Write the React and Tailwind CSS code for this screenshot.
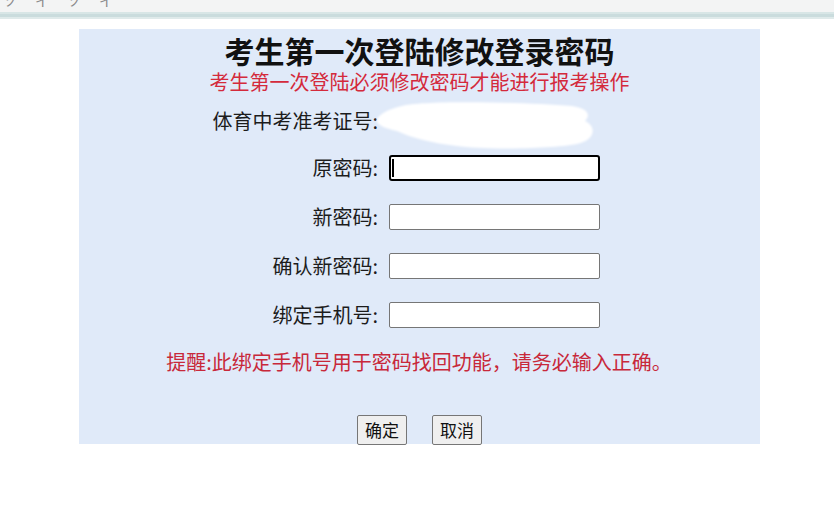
import React from "react";

const cjk = { fontFamily: '"Microsoft YaHei", "Noto Sans CJK SC", "Noto Sans", sans-serif' };

function Row({ label, focused }) {
  return (
    <div className="flex items-center h-[26px]">
      <div className="w-[300px] text-right text-[20px] leading-[26px] text-[#1c1c1c] pr-[1px]">{label}</div>
      <div className="relative ml-[10px]">
        {focused ? (
          <>
            <input
              readOnly
              className="block w-[211px] h-[26px] bg-white border-2 border-black rounded-[3px] outline-none"
            />
            <span className="absolute left-[3px] top-[4px] w-[2px] h-[18px] bg-black" />
          </>
        ) : (
          <input
            readOnly
            className="block w-[211px] h-[26px] bg-white border border-[#767676] rounded-[2px] outline-none"
          />
        )}
      </div>
    </div>
  );
}

export default function App() {
  return (
    <div className="w-[834px] h-[512px] bg-white overflow-hidden" style={cjk}>
      <div className="h-[12px] bg-[#f3f4f4] overflow-hidden relative">
        <div className="absolute left-[3px] top-[-10px] text-[14px] text-[#8a8a8a] tracking-[18px] whitespace-nowrap">ソイソイ</div>
      </div>
      <div className="h-[7px] bg-[#cadcdd] border-t-[2px] border-b-[2px] border-t-[#d8e6e6] border-b-[#dfeaea]" />
      <div className="h-[10px]" />
      <div className="relative ml-[79px] w-[681px] h-[415px] bg-[#e0eaf9] flex flex-col">
        <div className="mt-[3px] h-[36px] leading-[36px] text-center text-[30px] font-bold text-[#111]">
          考生第一次登陆修改登录密码
        </div>
        <div className="mt-[2px] h-[24px] leading-[24px] text-center text-[20px] text-[#d42a3c]">
          考生第一次登陆必须修改密码才能进行报考操作
        </div>
        <div className="mt-[14px] flex items-center h-[26px]">
          <div className="w-[300px] text-right text-[20px] leading-[26px] text-[#1c1c1c] pr-[1px]">体育中考准考证号:</div>
        </div>
        <div className="mt-[21px] flex flex-col gap-[23px]">
          <Row label="原密码:" focused />
          <Row label="新密码:" />
          <Row label="确认新密码:" />
          <Row label="绑定手机号:" />
        </div>
        <div className="mt-[21px] h-[26px] leading-[26px] text-center text-[20px] text-[#c8283a] pr-[1px]">
          提醒:此绑定手机号用于密码找回功能，请务必输入正确。
        </div>
        <div className="mt-[40px] flex justify-center gap-[25px]">
          <button className="w-[50px] h-[30px] bg-[#efefef] border border-[#767676] rounded-[2px] text-[17px] leading-[28px] text-[#111]">确定</button>
          <button className="w-[50px] h-[30px] bg-[#efefef] border border-[#767676] rounded-[2px] text-[17px] leading-[28px] text-[#111]">取消</button>
        </div>
        <svg
          className="absolute left-[293px] top-[67px] blur-[1px]"
          width="230"
          height="60"
          viewBox="0 0 230 60"
        >
          <path
            d="M5 23 C10 15 22 12 30 10 C50 4 150 6 200 10 C214 12 220 18 213 25 C226 31 222 45 205 48 C180 53 110 54 85 50 C60 47 40 42 25 35 C12 32 4 29 5 23 Z"
            fill="#ffffff"
          />
        </svg>
      </div>
    </div>
  );
}
